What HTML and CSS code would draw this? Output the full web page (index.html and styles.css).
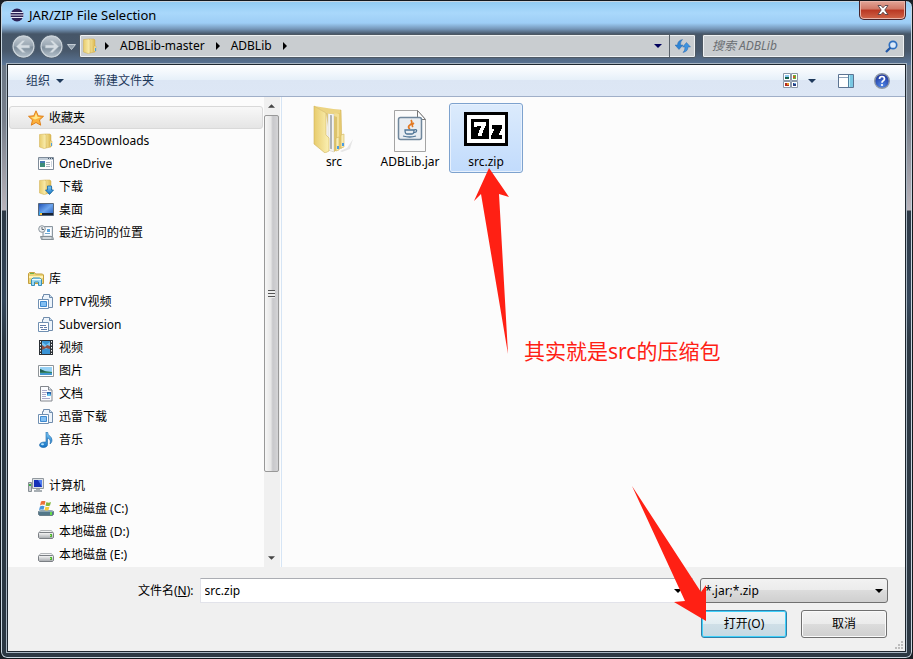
FILE: index.html
```html
<!DOCTYPE html>
<html lang="zh-CN">
<head>
<meta charset="utf-8">
<title>JAR/ZIP File Selection</title>
<link rel="stylesheet" href="styles.css">
</head>
<body>
<svg class="defs" aria-hidden="true">
  <defs>
    <linearGradient id="gold" x1="0" x2="1"><stop offset="0" stop-color="#f7e8a0"/><stop offset="1" stop-color="#dcb850"/></linearGradient>
    <linearGradient id="goldLight" x1="0" x2="1"><stop offset="0" stop-color="#e8cc6c"/><stop offset="1" stop-color="#fbf0b4"/></linearGradient>
    <linearGradient id="sky" x1="0" y1="0" x2="1" y2="1"><stop offset="0" stop-color="#1c4fb4"/><stop offset=".5" stop-color="#6ea6ee"/><stop offset="1" stop-color="#1d56ba"/></linearGradient>
    <linearGradient id="blue" x1="0" y1="0" x2="0" y2="1"><stop offset="0" stop-color="#7cc8f6"/><stop offset="1" stop-color="#1673c4"/></linearGradient>
    <linearGradient id="metal" x1="0" y1="0" x2="0" y2="1"><stop offset="0" stop-color="#fafafa"/><stop offset="1" stop-color="#a4a8ac"/></linearGradient>
    <linearGradient id="orb" x1="0" y1="0" x2="0" y2="1"><stop offset="0" stop-color="#c6ced6"/><stop offset=".48" stop-color="#98a5b1"/><stop offset=".52" stop-color="#7d8c9a"/><stop offset="1" stop-color="#b9c6d0"/></linearGradient>
    <radialGradient id="help" cx=".5" cy=".8" r=".8"><stop offset="0" stop-color="#4f86e6"/><stop offset="1" stop-color="#1a2f96"/></radialGradient>
    <symbol id="i-folder" viewBox="0 0 16 16">
      <path d="M7 1h5l1 1v12l-5 1z" fill="url(#gold)" stroke="#d0ae50" stroke-width=".5"/>
      <path d="M1.500 1.500L7 1l1 1v13l-1.500.7-5-1.700z" fill="url(#goldLight)" stroke="#d0ae50" stroke-width=".5"/>
      <path d="M12 8h2v5l-2 .5z" fill="#f6e49a" stroke="#c9a546" stroke-width=".4"/><path d="M13 10h1v3h-1z" fill="#4aa0e0"/>
    </symbol>
    <symbol id="i-star" viewBox="0 0 16 16"><path d="M8 .8l2.200 5 5.300.500-4 3.600 1.200 5.300L8 12.500l-4.700 2.700 1.200-5.300-4-3.600 5.300-.500z" fill="#fbb13c" stroke="#e0801c"/><path d="M8 3l1.500 4 3.500.3-6 2.200-4-2 3.500-.5z" fill="#ffe88c"/></symbol>
    <symbol id="i-onedrive" viewBox="0 0 16 16"><path d="M.5 1.500h15v12H.5z" fill="#fff" stroke="#7e8b99"/><path d="M1 2h14v2H1z" fill="#c3ced9"/><path d="M10 2h1v1h-1zM12 2h1v1h-1zM14 2h1v1h-1z" fill="#44566a"/><path d="M2 5h5v6H2z" fill="#3e8d78"/><path d="M2 5h5v2H2z" fill="#467ab4"/><path d="M8 6.500h4M8 8.500h4M8 10.500h4" stroke="#aab4be"/><path d="M13 5h1v6h-1z" fill="#ccd4dc"/></symbol>
    <symbol id="i-down" viewBox="0 0 16 16"><use href="#i-folder"/><path d="M9.500 7h4v4h2l-4 4.500-4-4.500h2z" fill="url(#blue)" stroke="#1266a8" stroke-width=".8"/></symbol>
    <symbol id="i-desktop" viewBox="0 0 16 16"><path d="M.5 1.500h15v12H.5z" fill="url(#sky)" stroke="#58687c"/><path d="M4 11h11v2H4z" fill="#182434"/><path d="M1 10h3v3H1z" fill="#39a9ee"/><path d="M2 11h2v2H2z" fill="#fbc23c"/></symbol>
    <symbol id="i-recent" viewBox="0 0 16 16"><path d="M5 1.500h9.500v10H5z" fill="#e4eaf0" stroke="#8b969f"/><path d="M6.500 3H13v7H6.500z" fill="#fff"/><path d="M9 4h3v3H9z" fill="#58a4de"/><path d="M7 8.500h5" stroke="#74a8ce"/><path d="M2.500 11.500h12l1 3h-12z" fill="#b1bac0" stroke="#848f96"/><path d="M5 13h8" stroke="#eff2f4"/><circle cx="4" cy="4" r="3.300" fill="#eef0f2" stroke="#8c969e"/><path d="M4 2v2.500h2" fill="none" stroke="#5d6871"/></symbol>
    <symbol id="i-lib" viewBox="0 0 16 16"><path d="M.5 12.500v-10l1-1h5l1 1.500h7l1 1v8.500z" fill="#ecd477" stroke="#c49f3f"/><path d="M1 5h14v2H1z" fill="#fff2b5"/><path d="M2 2.500h4" stroke="#6db348"/><path d="M3.500 14.500v-6L5 7h6.500l2 1.500v6h-3V11h-4v3.500z" fill="#9edaf3" stroke="#348fbd"/><path d="M4 8.500h9" stroke="#eafaff"/></symbol>
    <symbol id="i-stack" viewBox="0 0 16 16"><path d="M4.500 6V2.500h1v-2h6l3 3v10h-4" fill="#edf4fb" stroke="#708cac"/><path d="M11.500.5v3h3" fill="#c7daeb" stroke="#708cac"/><path d="M.5 5.500h10v9H.5z" fill="#fff" stroke="#7090b2"/></symbol>
    <symbol id="i-pptv" viewBox="0 0 16 16"><use href="#i-stack"/><path d="M2.500 7.500h6v5h-6z" fill="#82bff2" stroke="#3f8ad0"/></symbol>
    <symbol id="i-svn" viewBox="0 0 16 16"><use href="#i-stack"/><path d="M2 8.500h6M2 10.500h3M6 10.500h3M3 12.500h6" stroke="#627da8"/></symbol>
    <symbol id="i-video" viewBox="0 0 16 16"><path d="M1 0h14v15H1z" fill="#2c3136"/><path d="M4 1h8v13H4z" fill="#3993d5"/><path d="M4 2l4 3 4-3v5L8 9 4 7z" fill="#78c4f3"/><path d="M4 5l3 2 2-2 3 1v3l-4-1-4 2z" fill="#914f45"/><path d="M2.500 1v13M13.500 1v13" stroke="#f4f4f4" stroke-dasharray="1.500 1.500"/></symbol>
    <symbol id="i-picture" viewBox="0 0 16 16"><path d="M.5 2.500h15v11H.5z" fill="#fff" stroke="#8f9498"/><path d="M2 4h12v8H2z" fill="#97d1f5"/><path d="M2 6l5 2 7 1v2H2z" fill="#358564"/><path d="M2 6l6 3H2z" fill="#215d55"/><path d="M2 10h12v2H2z" fill="#4297cf"/></symbol>
    <symbol id="i-doc" viewBox="0 0 16 16"><path d="M2.500.5h8l3.500 3.500v11H2.500z" fill="#fbfcff" stroke="#83878d"/><path d="M10.500.5V4H14" fill="#dce4ed" stroke="#83878d"/><path d="M4 4.500h5M4 6.500h8M4 8.500h4M4 10.500h4M4 12.500h8" stroke="#aaa9cb"/><path d="M9 6h4v4H9z" fill="#235fa9"/><path d="M9 9l2-2 2 2v1H9z" fill="#69c4ef"/></symbol>
    <symbol id="i-music" viewBox="0 0 16 16"><path d="M8 0h1.500c0 4 4.500 4 4.500 8 0 2-1 3-2 4 1-4-.5-5-2.500-6v6.500C9.500 15 7 15.500 5 15.500s-3.500-1-3.500-2.500C1.500 11 4 10 6.500 10H8z" fill="url(#blue)" stroke="#1a65a6" stroke-width=".6"/><ellipse cx="4.500" cy="12.300" rx="1.500" ry="1" fill="#b5e4fc"/></symbol>
    <symbol id="i-pc" viewBox="0 0 16 16"><path d="M.5 4.500h3v9h-3z" fill="#cbd0d3" stroke="#878e94"/><path d="M1 6h2v2H1z" fill="#3cae44"/><path d="M4.500.5h11v10h-11z" fill="#dde1e5" stroke="#92999f"/><path d="M6 2h8v7H6z" fill="#1631b8"/><path d="M10 2h4v7z" fill="#4f7cf1"/><path d="M8 11h4v1h2v2H6v-2h2z" fill="#a8afb4"/></symbol>
    <symbol id="i-disk" viewBox="0 0 16 16"><path d="M2.500 6.500h11l2 3H.5z" fill="#f2f3f4" stroke="#b2b5b8"/><path d="M.5 9.500q0-1 1-1h13q1 0 1 1v4l-1 1h-13l-1-1z" fill="url(#metal)" stroke="#7b7f84"/><path d="M12 10h2v3h-2z" fill="#4eb035"/><path d="M12 11h1v1h-1z" fill="#a7ed70"/></symbol>
    <symbol id="i-sysdisk" viewBox="0 0 16 16"><path d="M.5 10.500l2-1h11l2 1v3l-1 1h-13l-1-1z" fill="#53788a" stroke="#6a7f8b"/><path d="M1 10h14" stroke="#c0d2d9"/><path d="M12 11h2v3h-2z" fill="#67db49"/><path d="M3 .5q3-1.500 4.500 0L6.500 4Q4.500 3 2 4.500z" fill="#ee7139"/><path d="M8.500 1q2 1.500 4.500 0l-1 3.500q-2.500 1-4.500 0z" fill="#82b63c"/><path d="M2 5.500q2-1.500 4.500-.3l-1 3.600Q3 8 1 9z" fill="#4794dc"/><path d="M7.500 5.500q2 1 4 0l-1 3.500q-2 1-4 0z" fill="#f8ca3d"/></symbol>
    <symbol id="i-tri" viewBox="0 0 8 4"><path d="M0 0h8L4 4z" fill="currentColor"/></symbol>
    <symbol id="i-next" viewBox="0 0 4 8"><path d="M0 0l4 4-4 4z" fill="currentColor"/></symbol>
  </defs>
</svg>

<div class="window">
  <header class="titlebar">
    <svg class="app-icon" viewBox="0 0 14 14"><circle cx="7" cy="7" r="6.500" fill="#2c2255"/><path d="M1 4.500h12M0 7h14M1 9.500h12" stroke="#e6e6f4" stroke-width="1.200"/></svg>
    <h1>JAR/ZIP File Selection</h1>
    <button class="close" aria-label="关闭"><svg viewBox="0 0 12 10"><path d="M1 .5h3l2 2.300L8 .5h3L7.800 5 11 9.500H8L6 7.200 4 9.500H1L4.200 5z" fill="#fff" stroke="#544348" stroke-width=".9"/></svg></button>
  </header>

  <nav class="navbar">
    <div class="travel">
      <button class="orb" aria-label="后退"><svg viewBox="0 0 24 24"><circle cx="12" cy="12" r="11" fill="url(#orb)" stroke="#536271"/><circle cx="12" cy="12" r="10" fill="none" stroke="#cdd5dc"/><path d="M5 12l6-6h3l-4 4.500h8v3h-8l4 4.500h-3z" fill="#d5dce2" stroke="#a9b5bf" stroke-width=".6"/></svg></button>
      <button class="orb" aria-label="前进"><svg viewBox="0 0 24 24"><circle cx="12" cy="12" r="11" fill="url(#orb)" stroke="#536271"/><circle cx="12" cy="12" r="10" fill="none" stroke="#cdd5dc"/><path d="M19 12l-6-6h-3l4 4.500H6v3h8L10 18h3z" fill="#d5dce2" stroke="#a9b5bf" stroke-width=".6"/></svg></button>
      <button class="recent" aria-label="最近的页面"><svg viewBox="0 0 9 6"><path d="M.5.5h8l-4 5z" fill="#8f9dab" stroke="#c2cbd3"/></svg></button>
    </div>
    <div class="address">
      <svg class="icon"><use href="#i-folder"/></svg>
      <svg class="next"><use href="#i-next"/></svg>
      <a href="#master">ADBLib-master</a>
      <svg class="next"><use href="#i-next"/></svg>
      <a href="#adblib">ADBLib</a>
      <svg class="next"><use href="#i-next"/></svg>
      <button class="history" aria-label="以前的位置"><svg class="tri"><use href="#i-tri"/></svg></button>
      <button class="refresh" aria-label="刷新"><svg viewBox="0 0 16 14"><path d="M4 10.500L0 6h2.500Q2.500 1.500 7.500.5 5.500 2 5.500 6H8z" fill="#2e84d4" stroke="#1b5ba6" stroke-width=".4"/><path d="M11.500 3.500L15.500 8H13q0 4.500-5 5.500 2-1.500 2-5.500H7.500z" fill="#3e93df" stroke="#1b5ba6" stroke-width=".4"/></svg></button>
    </div>
    <div class="search">
      <input type="search" aria-label="搜索 ADBLib" placeholder="搜索 ADBLib">
      <svg viewBox="0 0 13 13"><circle cx="8" cy="5" r="3.700" fill="#dceafa" stroke="#2e6fc0" stroke-width="1.700"/><path d="M5.300 7.700L1 12" stroke="#2258a8" stroke-width="2.300"/></svg>
    </div>
  </nav>

  <main class="client">
    <div class="toolbar">
      <button class="tool">组织 <svg class="tri"><use href="#i-tri"/></svg></button>
      <button class="tool">新建文件夹</button>
      <div class="tool-icons">
        <button class="tool" aria-label="更改您的视图"><svg class="view" viewBox="0 0 16 16"><g fill="#fff" stroke="#8b98a8"><path d="M.5.5h7v7h-7zM8.500.5h6v7h-6zM.5 8.500h7v6h-7zM8.500 8.500h6v6h-6z"/></g><path d="M2 2h4v2H2z" fill="#88c7ef"/><path d="M2 4h4v2H2z" fill="#16624c"/><path d="M10 2h3v4h-3z" fill="#69b53b"/><path d="M10 3h2v2h-2z" fill="#d45328"/><path d="M2 10h4v3H2z" fill="#b02a20"/><path d="M4 10h2v2H4z" fill="#e79c25"/><path d="M10 10h3v3h-3z" fill="#283d80"/><path d="M11 10h2v1h-2z" fill="#69a9df"/></svg></button>
        <button class="tool view-menu" aria-label="更多选项"><svg class="tri"><use href="#i-tri"/></svg></button>
        <button class="tool preview" aria-label="显示预览窗格"><svg viewBox="0 0 16 14"><path d="M.5.5h15v13H.5z" fill="#fff" stroke="#5c7492"/><path d="M1 3.500h9" stroke="#8fa4bb"/><path d="M10 1h5v12h-5z" fill="#78c7e2"/><path d="M10 1h2v12h-2z" fill="#b4e8f3"/><path d="M10.500 1v12" stroke="#4f7f9f"/></svg></button>
        <button class="tool" aria-label="获取帮助"><svg class="help" viewBox="0 0 16 16"><circle cx="8" cy="8" r="7.300" fill="url(#help)" stroke="#8d97a5" stroke-width="1.400"/><path d="M5.500 6q0-2.500 2.500-2.500T10.500 6q0 1-1.300 1.800T8 9.800" fill="none" stroke="#fff" stroke-width="1.700"/><circle cx="8" cy="12" r="1.100" fill="#fff"/></svg></button>
      </div>
    </div>

    <div class="panes">
      <aside class="tree">
        <ul>
          <li class="root current"><svg class="icon"><use href="#i-star"/></svg>收藏夹</li>
          <li><svg class="icon"><use href="#i-folder"/></svg>2345Downloads</li>
          <li><svg class="icon"><use href="#i-onedrive"/></svg>OneDrive</li>
          <li><svg class="icon"><use href="#i-down"/></svg>下载</li>
          <li><svg class="icon"><use href="#i-desktop"/></svg>桌面</li>
          <li><svg class="icon"><use href="#i-recent"/></svg>最近访问的位置</li>
        </ul>
        <ul>
          <li class="root"><svg class="icon"><use href="#i-lib"/></svg>库</li>
          <li><svg class="icon"><use href="#i-pptv"/></svg>PPTV视频</li>
          <li><svg class="icon"><use href="#i-svn"/></svg>Subversion</li>
          <li><svg class="icon"><use href="#i-video"/></svg>视频</li>
          <li><svg class="icon"><use href="#i-picture"/></svg>图片</li>
          <li><svg class="icon"><use href="#i-doc"/></svg>文档</li>
          <li><svg class="icon"><use href="#i-pptv"/></svg>迅雷下载</li>
          <li><svg class="icon"><use href="#i-music"/></svg>音乐</li>
        </ul>
        <ul>
          <li class="root"><svg class="icon"><use href="#i-pc"/></svg>计算机</li>
          <li><svg class="icon"><use href="#i-sysdisk"/></svg>本地磁盘 (C:)</li>
          <li><svg class="icon"><use href="#i-disk"/></svg>本地磁盘 (D:)</li>
          <li><svg class="icon"><use href="#i-disk"/></svg>本地磁盘 (E:)</li>
        </ul>
      </aside>
      <div class="scrollbar">
        <svg class="arrow up"><use href="#i-tri"/></svg>
        <div class="thumb"><span class="grip"></span></div>
        <svg class="arrow down"><use href="#i-tri"/></svg>
      </div>
      <section class="files">
        <button class="file">
          <svg viewBox="0 0 48 48"><path d="M30 46l7-3 6-9-3 10-8 3z" fill="#e6e6e6"/><path d="M16 5h15l1 38-10 3z" fill="#e6ca70" stroke="#d3b55c" stroke-width=".6"/><path d="M24 7l5 2v35h-5z" fill="#f3df96"/><path d="M18 8l6 1v38l-6-2z" fill="#f4f4f2" stroke="#c9c6b8" stroke-width=".5"/><path d="M20 10l2 .3v34l-2-.5z" fill="#aeb2b6"/><path d="M24 11l3 1v33l-3 2z" fill="#dcc36e"/><path d="M4 1l26 4v3l-10 1-4-1z" fill="#ecd482"/><path d="M4 1l12 7v22l3 3v13l-4 2-11-9z" fill="url(#goldLight)" stroke="#d2b35a" stroke-width=".6"/><path d="M26 33l3-1v13l-3 1zM31 30l3-1v13l-3 1z" fill="#f8edb4" stroke="#d4b75e" stroke-width=".6"/><path d="M27 41h2v3h-2zM32 38h2v3h-2z" fill="#4b9de1"/></svg>
          <span>src</span>
        </button>
        <button class="file">
          <svg viewBox="0 0 48 48"><path d="M8.500 5.500h23l8 9v32h-31z" fill="#fbfbfb" stroke="#a4a4a4"/><path d="M31.500 5.500v9h8z" fill="#fff" stroke="#777"/><rect x="12.500" y="12.500" width="23" height="22" rx="2" fill="#e8edf2" stroke="#70879c" stroke-width="1.500"/><path d="M25 15q2 3-1 5t0 4M28 18q-3 2-1 4" fill="none" stroke="#e37922" stroke-width="1.700"/><path d="M19 25h9q0 4-2 4h-5q-2 0-2-4zM28 25q4-1 2 2l-3 1M17 31q7 2 13 0" fill="none" stroke="#4f7596" stroke-width="1.300"/></svg>
          <span>ADBLib.jar</span>
        </button>
        <button class="file selected">
          <svg viewBox="0 0 48 48"><path d="M2 7h44v34H2z"/><path d="M5 10h38v28H5z" fill="#fff"/><path d="M9 14h18v20H9z"/><path d="M12 17h12v4h-1v2h-1v2h-1v3h-1v3h-4v-3h1v-3h1v-2h1v-2h-4v1h-3z" fill="#fff"/><path d="M30 20h10v4h-1v2h-1v2h-1v2h3v4H29v-4h1v-2h1v-2h1v-2h-2z"/></svg>
          <span>src.zip</span>
        </button>
        <p class="note">其实就是src的压缩包</p>
        <svg class="mark mark-file" viewBox="0 0 36 188"><path d="M16 1L36 30 26 27 35 187 8 27 1 34z"/></svg>
      </section>
    </div>

    <form class="footer">
      <div class="row">
        <label for="name">文件名(<u>N</u>):</label>
        <div class="combo"><input id="name" type="text" value="src.zip"><svg class="tri"><use href="#i-tri"/></svg></div>
        <div class="filter"><select aria-label="文件类型"><option>*.jar;*.zip</option></select><svg class="tri"><use href="#i-tri"/></svg></div>
      </div>
      <div class="row actions">
        <button type="button" class="push default">打开(O)</button>
        <button type="button" class="push">取消</button>
      </div>
      <svg class="sizer" viewBox="0 0 9 9"><path d="M7 1h2v2H7zM4 4h2v2H4zM7 4h2v2H7zM1 7h2v2H1zM4 7h2v2H4zM7 7h2v2H7z" fill="#bdbdbd"/></svg>
      <svg class="mark mark-open" viewBox="0 0 76 138"><path d="M1 1L70 107 75 100V136L43 117 54 116z"/></svg>
    </form>
  </main>
</div>
</body>
</html>
```
FILE: styles.css
```css
* { box-sizing: border-box; }
body {
  margin: 0;
  background: #1b2026;
  font: 12px/16px "Noto Sans", "Noto Sans CJK SC", sans-serif;
  color: #000;
}
button, input, select { font: inherit; color: inherit; margin: 0; }
button { background: none; border: 0; padding: 0; }
svg { display: block; flex: none; }
ul, p, h1 { margin: 0; padding: 0; }
a { color: inherit; text-decoration: none; }
.defs { position: absolute; width: 0; height: 0; }
.icon { width: 16px; height: 16px; }
.tri { width: 8px; height: 4px; }

/* glass frame */
.window {
  min-height: 100vh;
  display: flex;
  flex-direction: column;
  padding: 0 6px 6px;
  border: 1px solid #14181d;
  border-radius: 7px;
  box-shadow: inset 0 0 0 1px #c8d5df;
  background:
    linear-gradient(#8fcaf1 0, #a9d8fb 12px, #9dcdf5 22px, #7596b8 28px, #465668 33px, #48586b 50px, #5b7697 64px, transparent 64px),
    linear-gradient(#6b7887 64px, #777f8b 120px, #b9b4bb 209px, #2d3945 210px, #34465a 300px, #2c3843 340px, #2c3843);
}
.titlebar { display: flex; align-items: flex-start; height: 33px; padding-left: 3px; }
.app-icon { width: 14px; height: 14px; margin-top: 7px; }
.titlebar h1 { flex: 1; margin: 6px 0 0 5px; font-size: 13px; line-height: 16px; font-weight: 400; }
.close {
  width: 47px;
  height: 19px;
  display: grid;
  place-items: center;
  border: 1px solid #46242a;
  border-top: 0;
  border-radius: 0 0 5px 5px;
  box-shadow: inset 0 0 0 1px #e9b5aa;
  background: linear-gradient(#e3a698, #d07866 45%, #b93722 50%, #d0664a);
}
.close svg { width: 12px; height: 10px; }

.navbar { display: flex; height: 30px; padding-right: 1px; }
.travel { display: flex; align-items: center; width: 72px; height: 25px; padding-left: 4px; gap: 3px; }
.orb svg { width: 25px; height: 25px; }
.recent svg { width: 9px; height: 6px; }
.address, .search {
  height: 24px;
  display: flex;
  align-items: center;
  border: 1px solid #4e5964;
  border-radius: 2px;
  box-shadow: inset 0 0 0 1px #eef1f3;
  background: #c9cdd0;
}
.address { flex: 1; padding-left: 2px; gap: 11px; }
.address .icon { margin-right: -4px; }
.address .next { width: 4px; height: 8px; }
.history { margin-left: auto; color: #00005c; }
.refresh { width: 26px; height: 22px; display: grid; place-items: center; border-left: 1px solid #59626b; margin-left: -4px; }
.refresh svg { width: 16px; height: 14px; }
.search { width: 203px; margin-left: 6px; padding: 0 6px 0 9px; }
.search input { flex: 1; min-width: 0; padding: 0; border: 0; outline: 0; background: none; font-style: italic; }
.search input::placeholder { color: #6b6f73; opacity: 1; }
.search svg { width: 13px; height: 13px; }

.client {
  flex: 1;
  display: flex;
  flex-direction: column;
  border: 1px solid #1f272f;
  box-shadow: 0 0 0 1px #a9b6c2;
  background: #fcfcfc;
}
.toolbar {
  display: flex;
  align-items: center;
  height: 32px;
  padding: 0 15px 0 18px;
  gap: 30px;
  border-bottom: 1px solid #a0afc8;
  background: linear-gradient(#fff, #e6f0f9 15px, #dce6f4 15px, #dde7f5 30px);
  color: #1e395b;
}
.tool { display: flex; align-items: center; gap: 6px; }
.tool-icons { display: flex; align-items: center; margin-left: auto; }
.view { width: 16px; height: 16px; }
.view-menu { margin: 0 22px 0 9px; }
.preview { margin-right: 20px; }
.preview svg { width: 16px; height: 14px; }
.help { width: 16px; height: 16px; }

.panes { flex: 1; display: flex; }
.tree { width: 256px; padding: 9px 1px 1px; display: flex; flex-direction: column; gap: 23px; }
.tree ul { list-style: none; }
.tree li { display: flex; align-items: center; gap: 5px; height: 23px; padding-left: 29px; }
.tree .root { padding-left: 19px; }
.tree .current {
  padding-left: 18px;
  border: 1px solid #d9d9d9;
  border-radius: 3px;
  background: linear-gradient(#f8f8f8, #e5e5e5);
}
.scrollbar { width: 16px; display: flex; flex-direction: column; align-items: flex-start; background: #f0f0f0; color: #444; }
.arrow { width: 7px; height: 4px; margin: 7px 4px; }
.up { transform: rotate(180deg); }
.down { margin-top: auto; }
.thumb {
  width: 15px;
  height: 76%;
  display: grid;
  place-items: center;
  border: 1px solid #989898;
  border-radius: 2px;
  background: linear-gradient(90deg, #f6f6f6, #e6e6e6 45%, #c8c8cb 60%, #d4d4d6);
}
.grip { width: 7px; height: 8px; background: repeating-linear-gradient(#555 0 1px, #eee 1px 3px); }

.files {
  position: relative;
  flex: 1;
  display: flex;
  align-items: flex-start;
  gap: 2px;
  padding: 6px 15px;
  margin-left: 1px;
  border-left: 1px solid #d6e5f5;
}
.file {
  width: 74px;
  height: 70px;
  padding: 1px 0 0;
  display: flex;
  flex-direction: column;
  align-items: center;
  gap: 1px;
  border: 1px solid transparent;
  border-radius: 3px;
}
.file svg { width: 48px; height: 48px; }
.selected { border-color: #7da2ce; box-shadow: inset 0 0 0 1px #e8f1fd; background: linear-gradient(#dcebfc, #c1dbfc); }
.note { position: absolute; left: 242px; top: 240px; font-size: 21px; line-height: 28px; color: #ff2014; }
.mark { position: absolute; fill: #ff2014; pointer-events: none; }
.mark-file { left: 191px; top: 70px; width: 36px; height: 188px; }

.footer {
  position: relative;
  display: flex;
  flex-direction: column;
  gap: 7px;
  padding: 11px 17px 13px 130px;
  background: #f0f0f0;
}
.row { display: flex; align-items: center; }
.combo { flex: 1; display: flex; align-items: center; height: 25px; margin: 0 7px 0 6px; padding: 0 10px 0 4px; border: 1px solid #e2e3ea; border-top-color: #abadb3; background: #fff; }
.combo input { flex: 1; min-width: 0; border: 0; outline: 0; padding: 0; background: none; }
.filter { position: relative; width: 188px; }
.filter select {
  width: 100%;
  height: 25px;
  padding: 0 4px;
  appearance: none;
  border: 1px solid #707070;
  border-radius: 3px;
  background: linear-gradient(#f2f2f2, #ebebeb 50%, #dcdcdc 50%, #cfcfcf);
}
.filter .tri { position: absolute; right: 5px; top: 11px; }
.actions { justify-content: flex-end; gap: 14px; padding-right: 1px; }
.push {
  width: 86px;
  height: 28px;
  border: 1px solid #707070;
  border-radius: 3px;
  box-shadow: inset 0 0 0 1px #fafafa;
  background: linear-gradient(#f2f2f2, #ebebeb 50%, #dcdcdc 50%, #cfcfcf);
}
.default { border-color: #2f7fa8; box-shadow: inset 0 0 0 1px #3fd0fa; background: linear-gradient(#eff4f6, #e1edf2 50%, #cfdfe7 50%, #c5d9e3); }
.sizer { position: absolute; right: 2px; bottom: 2px; width: 9px; height: 9px; }
.mark-open { right: 198px; bottom: 28px; width: 76px; height: 138px; }
```
